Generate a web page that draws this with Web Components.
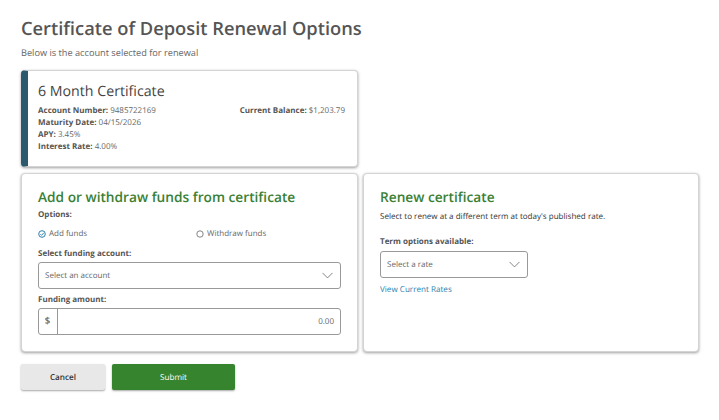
<!DOCTYPE html>
<html>
<head>
<meta charset="utf-8">
<title>Certificate of Deposit Renewal Options</title>
<style>
html, body { margin: 0; background: #fff; }
body { font-family: "Open Sans", sans-serif; color: #555; overflow: hidden; text-rendering: geometricPrecision; }
</style>
</head>
<body>
<renewal-page></renewal-page>
<script>
const CHEVRON = `<svg width="11" height="7" viewBox="0 0 11 7"><path d="M.5.9 5.5 5.9 10.5.9" fill="none" stroke="#666" stroke-width=".8"/></svg>`;

class CdCard extends HTMLElement {
    constructor() {
        super();
        this.attachShadow({mode: "open"});
        this.shadowRoot.innerHTML = `
        <style>
            :host {
                display: block;
                box-sizing: border-box;
                background: #fff;
                border: 1px solid #d4d4d4;
                border-radius: 4px;
                box-shadow: 0 1px 3px rgba(0,0,0,.38);
                padding: 14px 16px;
            }
            h2 {
                margin: 0;
                font-size: 13.7px;
                line-height: 20px;
                font-weight: 600;
                color: #3a8035;
            }
        </style>
        <h2>${this.getAttribute("heading") || ""}</h2>
        <slot></slot>`;
    }
}

class AccountCard extends HTMLElement {
    constructor() {
        super();
        this.attachShadow({mode: "open"});
        this.shadowRoot.innerHTML = `
        <style>
            :host {
                display: block;
                box-sizing: border-box;
                width: 337px;
                height: 97px;
                background: #fff;
                border: 1px solid #d4d4d4;
                border-left: 7px solid #2b5a6e;
                border-radius: 4px;
                box-shadow: 0 1px 3px rgba(0,0,0,.38);
                padding: 11px 12px 0 10px;
            }
            h2 {
                margin: 0 0 3px;
                font-size: 14.2px;
                line-height: 20px;
                font-weight: 500;
                color: #444;
            }
            .cols { display: flex; justify-content: space-between; }
            .row { font-size: 8px; line-height: 12px; color: #666; }
            b { font-weight: 700; color: #555; }
        </style>
        <h2>6 Month Certificate</h2>
        <div class="cols">
            <div>
                <div class="row"><b>Account Number:</b> 9485722169</div>
                <div class="row"><b>Maturity Date:</b> 04/15/2026</div>
                <div class="row"><b>APY:</b> 3.45%</div>
                <div class="row"><b>Interest Rate:</b> 4.00%</div>
            </div>
            <div class="row"><b>Current Balance:</b> $1,203.79</div>
        </div>`;
    }
}

class FieldLabel extends HTMLElement {
    constructor() {
        super();
        this.attachShadow({mode: "open"});
        this.shadowRoot.innerHTML = `
        <style>
            :host { display: block; font-size: 8px; line-height: 12px; font-weight: 700; color: #555; }
        </style>
        <slot></slot>`;
    }
}

class RadioOption extends HTMLElement {
    constructor() {
        super();
        this.attachShadow({mode: "open"});
        const on = this.hasAttribute("checked");
        const mark = on
            ? `<circle cx="4" cy="4" r="3.3" fill="none" stroke="#2b7fb0" stroke-width="1"/><path d="M2.3 4.1 3.6 5.4 5.8 2.8" fill="none" stroke="#2b7fb0" stroke-width=".9"/>`
            : `<circle cx="4" cy="4" r="3.2" fill="none" stroke="#666" stroke-width=".8"/>`;
        this.shadowRoot.innerHTML = `
        <style>
            :host { display: inline-flex; align-items: center; gap: 3px; font-size: 8px; line-height: 12px; color: #666; }
            svg { display: block; }
        </style>
        <svg width="8" height="8" viewBox="0 0 8 8">${mark}</svg>
        <slot></slot>`;
    }
}

class SelectBox extends HTMLElement {
    constructor() {
        super();
        this.attachShadow({mode: "open"});
        this.shadowRoot.innerHTML = `
        <style>
            :host {
                display: flex;
                align-items: center;
                justify-content: space-between;
                box-sizing: border-box;
                height: 27px;
                padding: 0 7px 0 6px;
                border: 1px solid #999;
                border-radius: 3px;
                background: #fff;
                font-size: 8px;
                color: #666;
            }
        </style>
        <slot></slot>${CHEVRON}`;
    }
}

class AmountInput extends HTMLElement {
    constructor() {
        super();
        this.attachShadow({mode: "open"});
        this.shadowRoot.innerHTML = `
        <style>
            :host {
                display: flex;
                box-sizing: border-box;
                height: 27px;
                border: 1px solid #999;
                border-radius: 3px;
                font-size: 8px;
                color: #666;
            }
            .pre {
                box-sizing: border-box;
                width: 19px;
                border-right: 1px solid #999;
                display: flex;
                align-items: center;
                justify-content: center;
                font-size: 9.5px;
                font-weight: 600;
                padding: 0 1px 3px 0;
            }
            .val { flex: 1; display: flex; align-items: center; justify-content: flex-end; padding-right: 6px; }
        </style>
        <div class="pre">$</div>
        <div class="val"><slot></slot></div>`;
    }
}

class ActionButton extends HTMLElement {
    constructor() {
        super();
        this.attachShadow({mode: "open"});
        this.shadowRoot.innerHTML = `
        <style>
            :host {
                display: flex;
                align-items: center;
                justify-content: center;
                box-sizing: border-box;
                height: 26px;
                border-radius: 2px;
                font-size: 8.2px;
                font-weight: 600;
                box-shadow: 0 1px 2px rgba(0,0,0,.35);
                background: #e8e8e8;
                color: #333;
            }
            :host([primary]) { background: #37842f; color: #fff; font-weight: 500; }
        </style>
        <slot></slot>`;
    }
}

class RenewalPage extends HTMLElement {
    constructor() {
        super();
        this.attachShadow({mode: "open"});
        this.shadowRoot.innerHTML = `
        <style>
            :host { display: block; box-sizing: border-box; width: 719px; height: 420px; padding: 16px 20px 0 21px; }
            h1 { margin: 0; font-size: 18.3px; line-height: 26px; font-weight: 600; color: #555; }
            .sub { margin: 4px 0 0; font-size: 9.2px; line-height: 13px; color: #666; }
            account-card { margin-top: 11px; }
            .cards { display: grid; grid-template-columns: 337px 336px; gap: 5px; margin-top: 6px; height: 179px; }
            .opts { margin-top: 1px; }
            .radios { display: grid; grid-template-columns: 158px 1fr; margin: 7px 0 0; }
            .lbl2 { margin-top: 8px; margin-bottom: 2px; }
            .lbl3 { margin-top: 5px; margin-bottom: 2px; }
            .desc { margin: 3px 0 0; font-size: 8.05px; line-height: 12px; color: #333; }
            .term { margin-top: 13px; margin-bottom: 3px; }
            .narrow { width: 148px; }
            a { display: block; margin-top: 6px; font-size: 8.1px; line-height: 12px; color: #2b7fb0; text-decoration: none; }
            .actions { display: flex; gap: 7px; margin-top: 12px; }
            .cancel { width: 84px; }
            .submit { width: 123px; }
        </style>
        <h1>Certificate of Deposit Renewal Options</h1>
        <p class="sub">Below is the account selected for renewal</p>
        <account-card></account-card>
        <div class="cards">
            <cd-card heading="Add or withdraw funds from certificate">
                <field-label class="opts">Options:</field-label>
                <div class="radios">
                    <radio-option checked>Add funds</radio-option>
                    <radio-option>Withdraw funds</radio-option>
                </div>
                <field-label class="lbl2">Select funding account:</field-label>
                <select-box>Select an account</select-box>
                <field-label class="lbl3">Funding amount:</field-label>
                <amount-input>0.00</amount-input>
            </cd-card>
            <cd-card heading="Renew certificate">
                <p class="desc">Select to renew at a different term at today's published rate.</p>
                <field-label class="term">Term options available:</field-label>
                <select-box class="narrow">Select a rate</select-box>
                <a href="#">View Current Rates</a>
            </cd-card>
        </div>
        <div class="actions">
            <action-button class="cancel">Cancel</action-button>
            <action-button class="submit" primary>Submit</action-button>
        </div>`;
    }
}

customElements.define('cd-card', CdCard);
customElements.define('account-card', AccountCard);
customElements.define('field-label', FieldLabel);
customElements.define('radio-option', RadioOption);
customElements.define('select-box', SelectBox);
customElements.define('amount-input', AmountInput);
customElements.define('action-button', ActionButton);
customElements.define('renewal-page', RenewalPage);
</script>
</body>
</html>
